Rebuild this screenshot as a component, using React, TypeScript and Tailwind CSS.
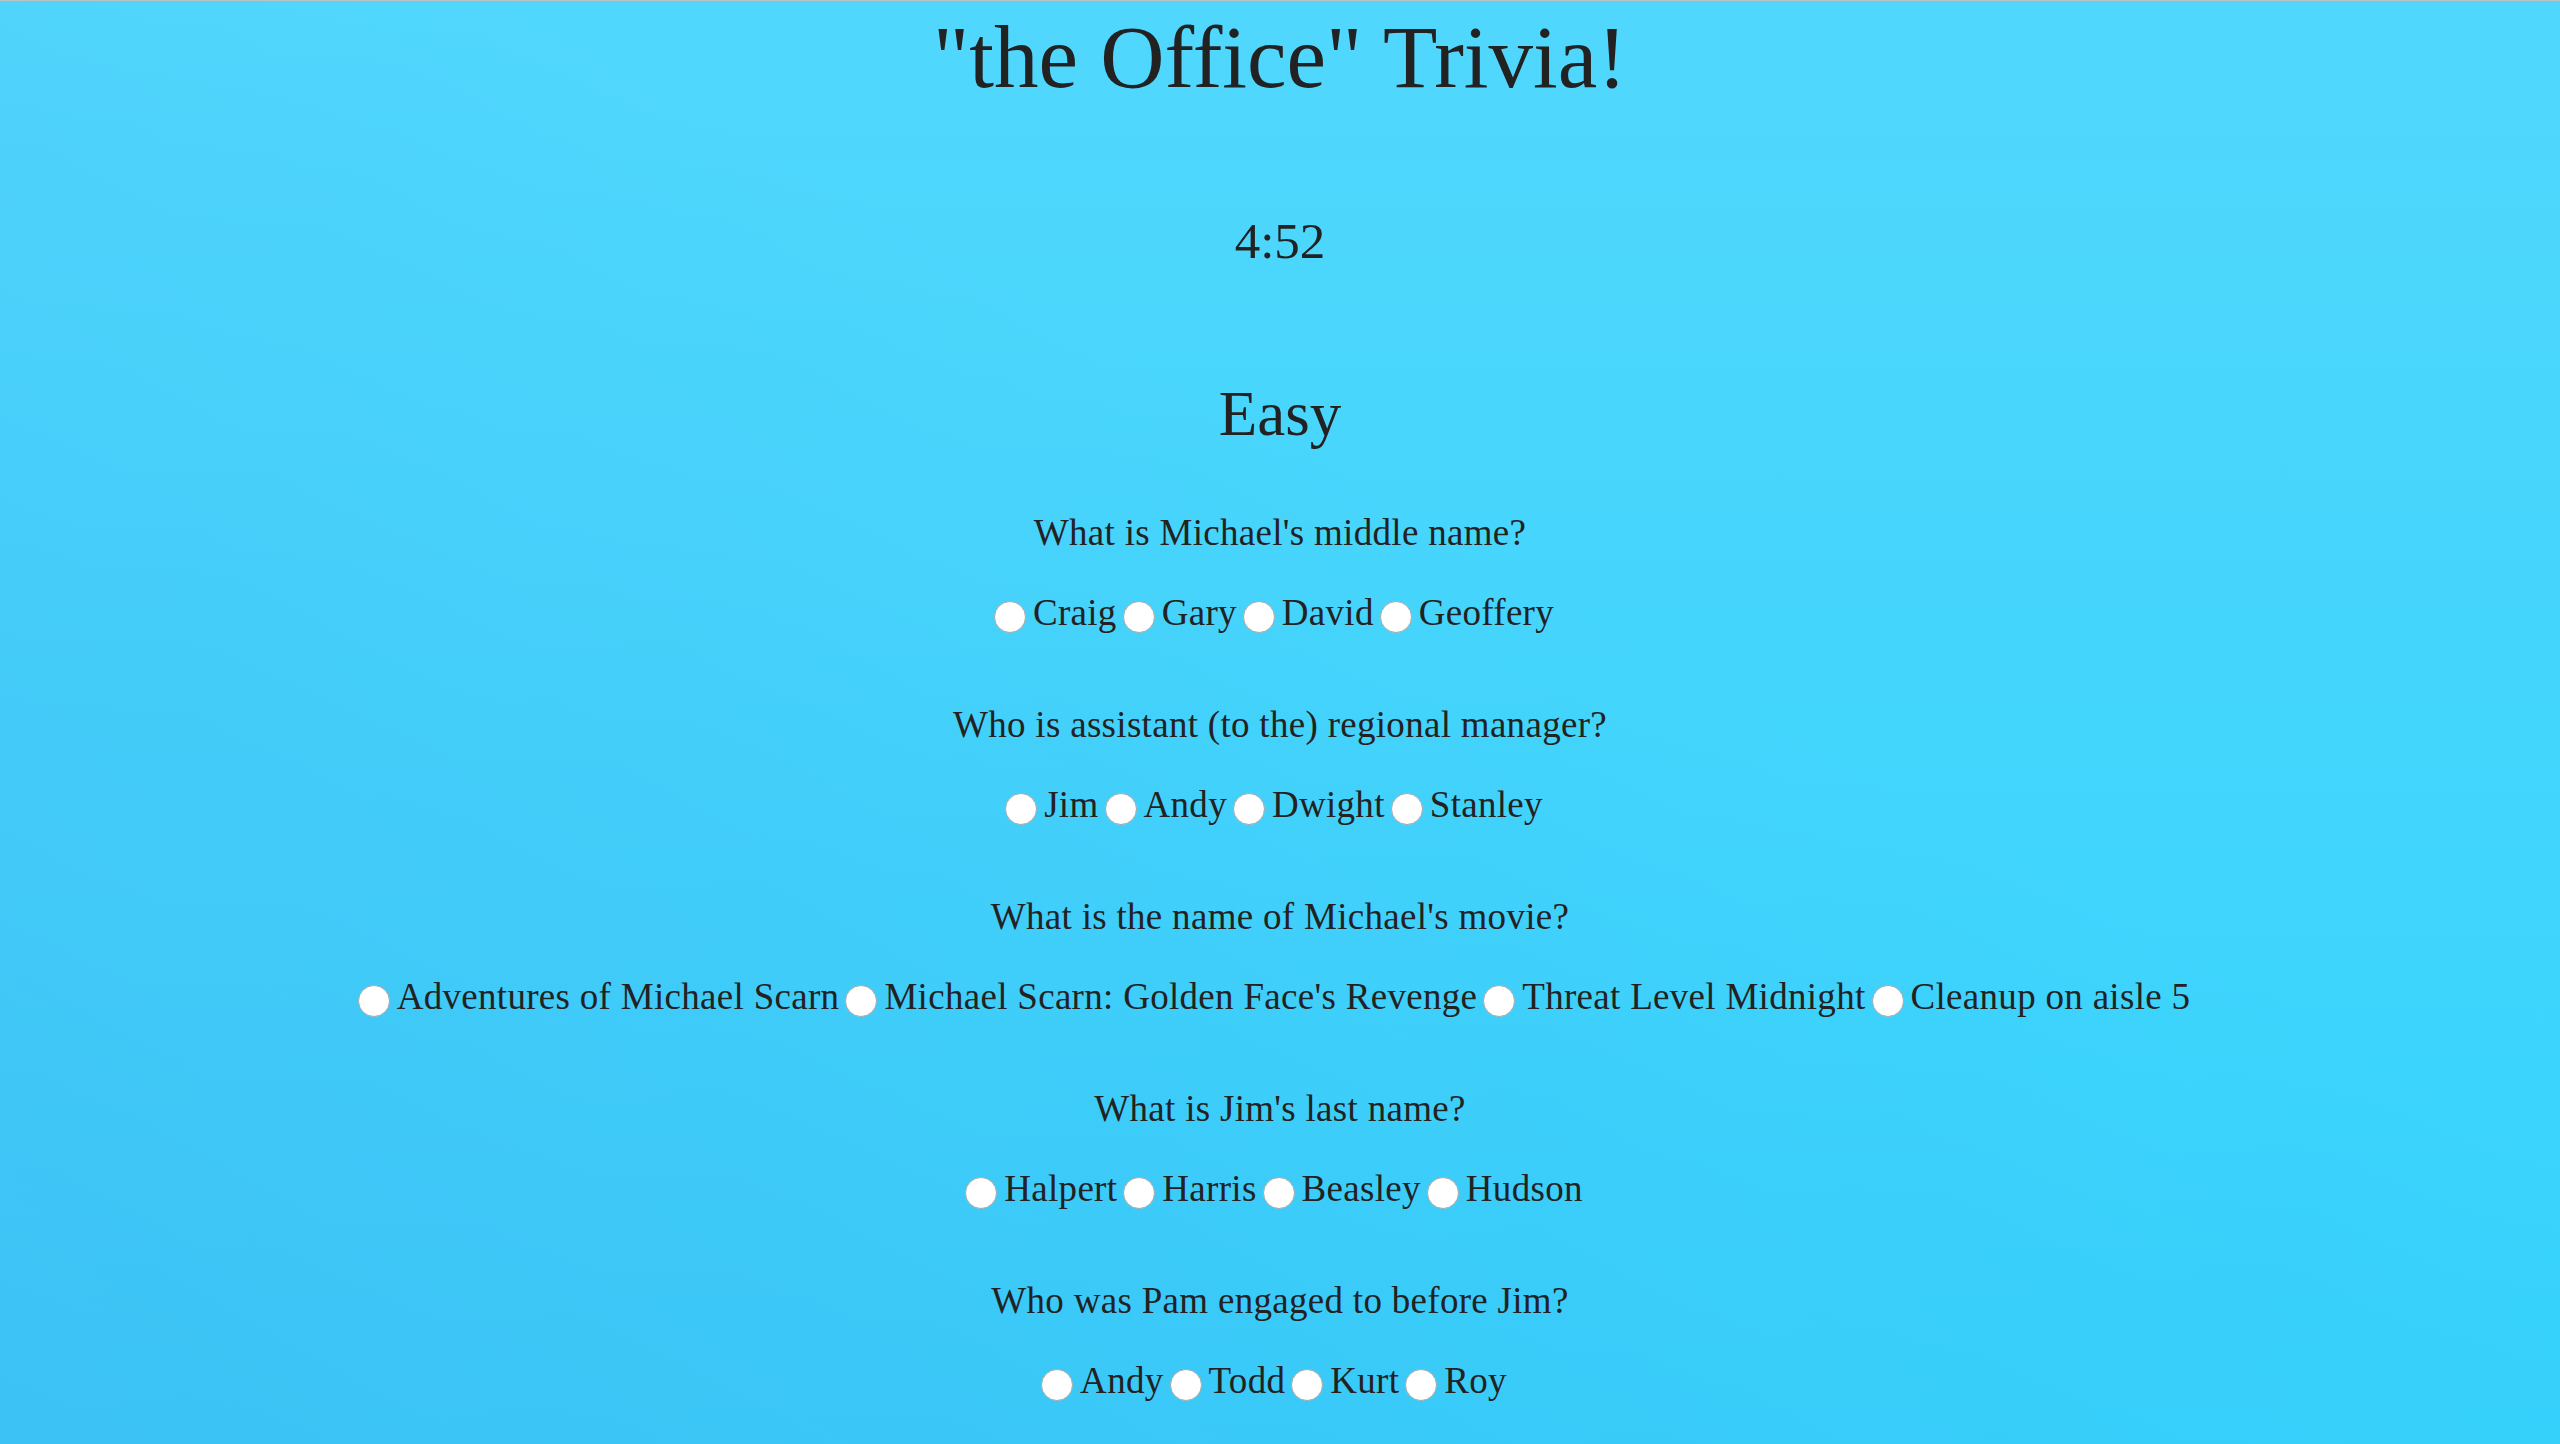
import React from 'react';

const questions = [
  { q: "What is Michael's middle name?", options: ['Craig', 'Gary', 'David', 'Geoffery'] },
  { q: 'Who is assistant (to the) regional manager?', options: ['Jim', 'Andy', 'Dwight', 'Stanley'] },
  {
    q: "What is the name of Michael's movie?",
    options: ['Adventures of Michael Scarn', "Michael Scarn: Golden Face's Revenge", 'Threat Level Midnight', 'Cleanup on aisle 5'],
  },
  { q: "What is Jim's last name?", options: ['Halpert', 'Harris', 'Beasley', 'Hudson'] },
  { q: 'Who was Pam engaged to before Jim?', options: ['Andy', 'Todd', 'Kurt', 'Roy'] },
];

const App: React.FC = () => {
  return (
    <div
      className="min-h-screen border-t border-[#b9c2c6] text-[#222] text-center pt-[6px] bg-[linear-gradient(to_top_right,rgba(70,177,238,0.5),rgba(70,177,238,0)_60%),linear-gradient(to_bottom,#51d7fd,#34d3fc)]"
      style={{ fontFamily: '"Liberation Serif", "Times New Roman", serif' }}
    >
      <h1 className="text-[89px] leading-[100px] font-normal">"the Office" Trivia!</h1>

      <div className="mt-[104px] text-[51px] leading-[60px]">4:52</div>

      <h2 className="mt-[107px] text-[63px] leading-[72px] font-normal">Easy</h2>

      <form>
        {questions.map((item, qi) => (
          <div key={qi} className={qi === 0 ? 'mt-[61px]' : 'mt-[68px]'}>
            <p className="text-[37px] leading-[44px] tracking-[0.3px]">{item.q}</p>
            <div className="mt-[36px] text-[37px] leading-[44px] tracking-[0.3px] pr-[6px]">
              {item.options.map((opt, oi) => (
                <label key={oi} className="whitespace-nowrap">
                  <input
                    type="radio"
                    name={`q${qi}`}
                    className="appearance-none inline-block align-middle w-[32px] h-[32px] rounded-full bg-white border border-[#a9a9a9] mr-[7px] m-0"
                  />
                  <span className="mr-[6px]">{opt}</span>
                </label>
              ))}
            </div>
          </div>
        ))}
      </form>
    </div>
  );
};

export default App;
